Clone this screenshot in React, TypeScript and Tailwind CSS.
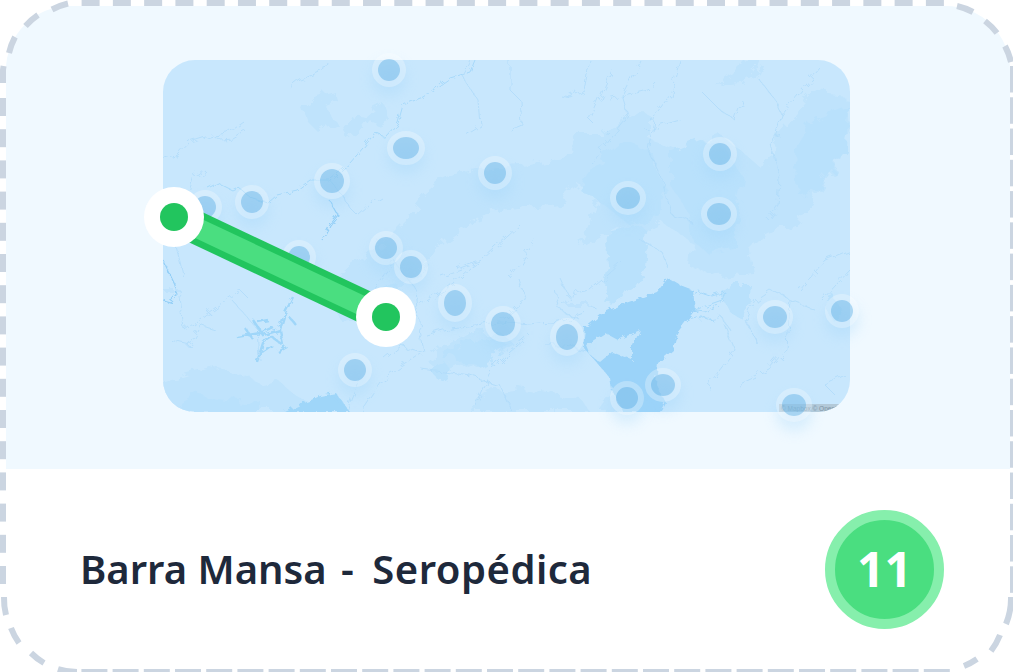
const terrainA = [
  "M163 412L163 380L187 373L210 367L237 373L260 383L277 380L303 400L330 412Z",
  "M443 180L460 172L480 170L530 165L567 157L580 135L600 135L620 125L640 110L650 115L650 140L665 145L680 150L700 140L720 135L740 150L765 172L777 133L813 93L847 97L850 127L840 160L823 183L797 223L767 233L750 250L753 273L720 277L690 267L693 243L663 223L640 235L617 227L580 247L590 225L600 197L577 183L557 203L527 207L500 210L470 222L445 240L425 268L400 290L372 322L345 325L330 300L345 272L380 245L410 215L425 195Z",
  "M428 362L445 346L470 332L500 332L515 345L495 358L478 368L460 362L440 372Z",
  "M470 412L490 392L520 388L548 392L580 398L590 412Z",
  "M600 412L612 395L640 405L640 412Z",
  "M715 85L727 78L745 60L762 60L758 72L742 83Z",
  "M345 128L352 115L366 118L375 110L385 105L390 120L380 125L368 120L358 135L348 140Z",
  "M303 108L315 98L335 92L337 100L325 105L335 122L318 132L308 122Z",
];
const terrainB = [
  "M600 160L624 140L650 150L658 175L668 190L660 215L630 225L605 205L580 190Z",
  "M670 152L700 140L722 145L745 180L735 222L735 250L710 255L692 240L690 215L670 185Z",
  "M795 150L815 118L848 105L846 150L815 190L798 195Z",
  "M607 232L640 225L648 232L645 268L625 300L603 302L610 268Z",
  "M163 412L195 396L225 400L262 402L262 412Z",
  "M360 300L395 282L405 300L375 320Z",
  "M442 358L462 342L490 336L508 345L495 360L478 366L455 358Z",
  "M720 295L735 285L752 285L750 310L742 320L728 310Z",
  "M824 306L832 292L842 310L832 320Z",
  "M432 372L445 362L450 370L438 380Z",
];
const rivers = [
  "M163 213L178 200L190 192L195 177L199 175L205 170M163 160L178 155L190 142L212 135L228 133L244 122M212 135L220 139L232 138L245 130",
  "M290 88L300 80L322 71L325 60M330 180L342 195L350 208L358 216L370 205L382 198",
  "M395 260L380 280L368 295M395 262L416 290L420 330L424 352L400 368L380 382L360 412",
  "M424 352L400 345L384 358M420 305L445 290L470 268L480 262",
  "M470 60L462 75L478 100L480 125L465 134M510 60L510 90L520 100L522 125L510 130",
  "M590 60L584 90L570 97L560 95M640 60L622 95L628 115L600 150L590 165M610 100L648 90L655 82",
  "M680 60L670 95L655 115L648 150L660 175L672 215L692 222M700 90L720 110L735 120L742 100",
  "M760 80L775 100L782 115L772 145L780 180L778 205L768 220M782 115L802 90L820 68",
  "M426 335L450 328L500 322L530 325L560 322L586 312",
  "M510 278L520 265L535 240M518 278L525 300L500 320",
  "M555 290L560 310L580 320M565 295L590 290L608 275L622 262",
  "M560 278L570 300L562 305L590 305L598 310",
  "M440 275L460 268L482 260L520 225",
  "M530 335L510 352L490 372L475 405M545 345L565 345L590 350M600 365L620 375L624 390",
  "M420 368L450 372L470 375L500 385L512 412M360 380L352 400L348 412",
  "M725 325L735 350L712 380L710 390M700 320L720 315L730 330",
  "M758 345L745 320L755 300L770 290L790 300L815 310M790 300L787 350L770 370L738 385",
  "M163 290L180 290L185 330L205 315L240 290L250 300M170 340L190 345L200 325L215 330",
  "M175 242L180 262L184 278M260 360L258 330L232 300",
  "M835 395L825 385L845 375M850 250L825 260L800 290M822 300L850 270",
  "M612 70L590 120L595 125M640 240L660 250L668 268M645 130L680 120",
];
const delta = "M690 298L700 292L712 296L725 292L722 300L708 305L695 310M692 310L705 312L718 305M685 320L700 316L715 322";
const pins: [number, number, number, number][] = [
  [389, 70, 11, 11], [406, 148, 13, 11], [495, 173, 11, 11], [332, 181, 12, 12],
  [252, 202, 11, 11], [205, 207, 11, 11], [720, 154, 11, 11], [628, 198, 12, 11],
  [719, 214, 12, 11], [386, 248, 11, 11], [411, 267, 11, 11], [299, 257, 11, 11],
  [355, 370, 11, 11], [455, 303, 11, 13], [503, 324, 12, 12], [567, 337, 11, 13],
  [775, 317, 12, 11], [842, 311, 11, 11], [627, 398, 11, 11], [663, 385, 12, 11],
  [794, 405, 12, 11],
];

const topDashes = Array.from({ length: 28 }, (_, k) => 81.6 + 31.27 * k);
const leftDashes = Array.from({ length: 16 }, (_, k) => 98 + 31.2 * k);
const rightDashes = Array.from({ length: 17 }, (_, k) => 66 + 31.27 * k);
const bottomDashes = Array.from({ length: 28 }, (_, k) => 81.4 + 31.2 * k);

const cornerDashes = [
  "M3 83L3 70A67 67 0 0 1 3.6 66",
  "M9 53A67 67 0 0 1 15 37",
  "M25.5 26A67 67 0 0 1 38 15",
  "M52 9.5A67 67 0 0 1 68 3.5",
  "M957 6A67 67 0 0 1 973 12",
  "M985 21A67 67 0 0 1 997 33",
  "M1005 46A67 67 0 0 1 1011 62",
  "M1011 597A67 67 0 0 1 1006 624",
  "M1000 635A67 67 0 0 1 991 651",
  "M977 659A67 67 0 0 1 964 666",
  "M4 597A67 67 0 0 0 6 615",
  "M11 628A67 67 0 0 0 19 643",
  "M31 653A67 67 0 0 0 44 663",
  "M58 669A67 67 0 0 0 77 672",
];

function MapBase() {
  return (
    <svg viewBox="163 60 687 352" className="block w-full h-full">
      <defs>
        <filter id="rough" filterUnits="userSpaceOnUse" x="120" y="20" width="780" height="440">
          <feTurbulence type="fractalNoise" baseFrequency="0.07" numOctaves="4" seed="4" result="n" />
          <feDisplacementMap in="SourceGraphic" in2="n" scale="16" />
          <feGaussianBlur stdDeviation="0.5" />
        </filter>
        <filter id="wiggle" filterUnits="userSpaceOnUse" x="120" y="20" width="780" height="440">
          <feTurbulence type="fractalNoise" baseFrequency="0.09" numOctaves="3" seed="9" result="n" />
          <feDisplacementMap in="SourceGraphic" in2="n" scale="12" />
          <feGaussianBlur stdDeviation="0.25" />
        </filter>
        <filter id="fine" filterUnits="userSpaceOnUse" x="120" y="20" width="780" height="440">
          <feTurbulence type="fractalNoise" baseFrequency="0.16" numOctaves="3" seed="2" result="n" />
          <feDisplacementMap in="SourceGraphic" in2="n" scale="6" />
          <feGaussianBlur stdDeviation="0.3" />
        </filter>
      </defs>
      <rect x="163" y="60" width="687" height="352" fill="#c8e7fd" />
      <g filter="url(#rough)">
        {terrainA.map((d) => (
          <path key={d} d={d} fill="#bfe3fc" />
        ))}
        {terrainB.map((d) => (
          <path key={d} d={d} fill="#b9e1fc" />
        ))}
      </g>
      <g filter="url(#wiggle)">
        {rivers.map((d) => (
          <path key={d} d={d} fill="none" stroke="#aedbfa" strokeWidth="0.8" />
        ))}
      </g>
      <g filter="url(#fine)">
        <path
          d="M208 188L218 183L232 190L238 187L250 197L268 203L277 195L297 190L310 180L330 180L350 163L363 148L375 133L385 137L398 123L403 105L423 97L450 78L470 72L475 60"
          fill="none"
          stroke="#a3d7f9"
          strokeWidth="0.9"
        />
        <path
          d="M330 201L338 215L330 225L322 240M163 260L175 285L176 295L170 302L163 300"
          fill="none"
          stroke="#93cff7"
          strokeWidth="1.2"
        />
        <path
          d="M293 297L285 313L280 330L283 345M280 330L263 335L253 320M273 327L260 333L237 337M283 345L272 337L263 343L257 362M287 347L278 352M268 320L258 322M245 328L252 338M290 318L296 325M272 345L262 352"
          fill="none"
          stroke="#9fd6f9"
          strokeWidth="2.4"
        />
        <path d={delta} fill="none" stroke="#a3d7f9" strokeWidth="0.9" />
        <path
          d="M668 278L657 292L640 298L620 305L603 313L585 328L583 347L597 363L610 378L612 390L623 412L660 412L665 402L656 384L658 363L673 350L677 333L695 310L693 290L680 285Z"
          fill="#9bd3f9"
        />
        <path d="M586 345L605 333L618 340L640 330L632 348L632 360L612 352L600 362L590 355Z" fill="#c3e5fc" />
        <path d="M285 412L300 405L320 396L336 393L350 412Z" fill="#9fd6f9" />
      </g>
      <rect x="779" y="404" width="71" height="8" fill="#b3c9d8" />
      <text x="781" y="411" fontSize="6.5" fill="#7d93a3" fontFamily="Liberation Sans, sans-serif">
        © Mapbox © OpenStreetMap
      </text>
    </svg>
  );
}

function Overlay() {
  return (
    <svg viewBox="163 60 687 352" className="absolute inset-0 w-full h-full overflow-visible">
      <defs>
        <filter id="glow" x="-100%" y="-100%" width="300%" height="300%">
          <feGaussianBlur stdDeviation="7" />
        </filter>
      </defs>
      {pins.map(([x, y, rx, ry]) => (
        <g key={`${x}-${y}`}>
          <ellipse cx={x} cy={y + 9} rx={rx + 6} ry={ry + 6} fill="#9bd3f9" opacity="0.3" filter="url(#glow)" />
          <ellipse cx={x} cy={y} rx={rx} ry={ry} fill="#7fc0ea" opacity="0.55" />
          <ellipse cx={x} cy={y} rx={rx + 3} ry={ry + 3} fill="none" stroke="#ffffff" strokeOpacity="0.28" strokeWidth="6" />
        </g>
      ))}
      <line x1="174" y1="217" x2="386" y2="317" stroke="#22c55e" strokeWidth="33" />
      <line x1="174" y1="217" x2="386" y2="317" stroke="#4ade80" strokeWidth="20" />
      <circle cx="174" cy="217" r="30" fill="#ffffff" />
      <circle cx="174" cy="217" r="14" fill="#22c55e" />
      <circle cx="386" cy="317" r="30" fill="#ffffff" />
      <circle cx="386" cy="317" r="14" fill="#22c55e" />
    </svg>
  );
}

function DashedFrame() {
  return (
    <svg className="absolute inset-0 w-full h-full pointer-events-none" viewBox="0 0 1013 672">
      <g fill="none" stroke="#cbd5e1" strokeWidth="6">
        {topDashes.map((x) => (
          <line key={x} x1={x} y1="3" x2={x + 18} y2="3" />
        ))}
        {leftDashes.map((y) => (
          <line key={y} x1="3" y1={y} x2="3" y2={y + 18} />
        ))}
        {rightDashes.map((y) => (
          <line key={y} x1="1013" y1={y} x2="1013" y2={y + 26.5} />
        ))}
        {bottomDashes.map((x) => (
          <line key={x} x1={x} y1="672" x2={Math.min(x + 26, 950)} y2="672" />
        ))}
        {cornerDashes.map((d) => (
          <path key={d} d={d} />
        ))}
      </g>
    </svg>
  );
}

export default function App() {
  return (
    <div className="relative w-[1013px] h-[672px] overflow-hidden bg-white font-['Noto_Sans',sans-serif]">
      <div className="w-[1016px] h-[675px] p-[6px] flex flex-col">
        <div className="h-[463px] shrink-0 bg-[#f0f9ff] rounded-t-[64px] flex pl-[157px] pt-[54px]">
          <div className="relative w-[687px] h-[352px]">
            <div className="w-full h-full rounded-[32px] overflow-hidden">
              <MapBase />
            </div>
            <Overlay />
          </div>
        </div>
        <div className="flex-1 flex items-center justify-between pl-[74px] pr-[66px]">
          <h1 className="text-[40px] leading-none font-semibold text-[#1e293b] whitespace-pre">
            Barra Mansa <span className="ml-[4px] mr-[8px]">-</span> <span className="tracking-[0.5px]">Seropédica</span>
          </h1>
          <div className="w-[119px] h-[119px] rounded-full bg-[#4ade80] border-[10px] border-[#86efac] flex items-center justify-center text-white font-bold text-[48px] leading-none">
            11
          </div>
        </div>
      </div>
      <DashedFrame />
    </div>
  );
}
